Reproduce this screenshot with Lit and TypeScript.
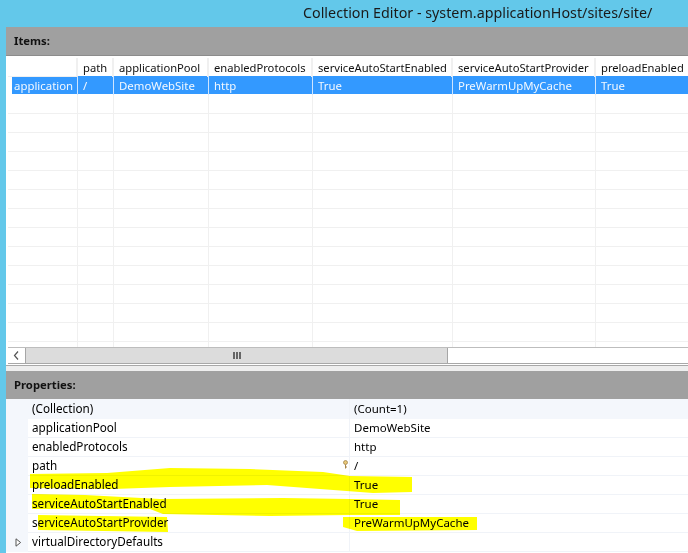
import { LitElement, html, css, svg } from "lit";
import { customElement } from "lit/decorators.js";

const columns = ["", "path", "applicationPool", "enabledProtocols", "serviceAutoStartEnabled", "serviceAutoStartProvider", "preloadEnabled"];
const selected = ["application", "/", "DemoWebSite", "http", "True", "PreWarmUpMyCache", "True"];
const props = [
  ["(Collection)", "(Count=1)"],
  ["applicationPool", "DemoWebSite"],
  ["enabledProtocols", "http"],
  ["path", "/"],
  ["preloadEnabled", "True"],
  ["serviceAutoStartEnabled", "True"],
  ["serviceAutoStartProvider", "PreWarmUpMyCache"],
  ["virtualDirectoryDefaults", ""],
];

@customElement("app-root")
export class AppRoot extends LitElement {
  static styles = css`
    :host {
      display: flex;
      flex-direction: column;
      position: relative;
      width: 688px;
      height: 553px;
      overflow: hidden;
      background: #63c8ea;
      font-family: "Noto Sans", "Open Sans", sans-serif;
      font-size: 11.7px;
      color: #000;
    }
    .title {
      height: 27px;
      padding-left: 303px;
      font-size: 14.3px;
      line-height: 26px;
      color: #1a1a1a;
      white-space: nowrap;
    }
    .window {
      flex: 1;
      margin-left: 6px;
      display: flex;
      flex-direction: column;
      background: #fff;
      min-height: 0;
    }
    .section {
      flex: none;
      height: 28px;
      padding-left: 8px;
      background: #a0a0a0;
      font-weight: 700;
      font-size: 11.3px;
      line-height: 28px;
      color: #111;
    }
    .list {
      flex: none;
      height: 310px;
      display: flex;
      flex-direction: column;
      border-top: 1px solid #8c8c8c;
      box-sizing: border-box;
      padding: 2px 0 0 2px;
    }
    .rows {
      flex: 1;
      min-height: 0;
      overflow: hidden;
    }
    .row {
      display: grid;
      grid-template-columns: 70px 36px 95px 104px 140px 143px 120px;
      height: 19px;
      box-sizing: border-box;
      border-bottom: 1px solid #f0f0f0;
      font-size: 11.4px;
      white-space: nowrap;
      line-height: 20px;
    }
    .row span {
      box-sizing: border-box;
      border-right: 1px solid #f0f0f0;
      padding-left: 5px;
    }
    .row.head {
      height: 18px;
      border-bottom: 0;
      font-size: 11.2px;
      line-height: 19px;
      color: #111;
    }
    .row.head span {
      border-right: 2px solid #f0f0f0;
    }
    .row.head span:first-child {
      background: #fff;
      border-bottom: 1px solid #f0f0f0;
    }
    .row.sel {
      color: #f2f8ff;
      background: linear-gradient(#3399ff, #3399ff) no-repeat 4px 0 / 100% 18px;
      border-bottom-color: #fff;
    }
    .row.sel span {
      border-right-color: #cfe5ff;
    }
    .row.sel span:first-child {
      padding-left: 6px;
    }
    .bar {
      flex: none;
      display: flex;
      height: 17px;
      margin-bottom: 1px;
      box-sizing: border-box;
      border-top: 1px solid #bdbdbd;
      border-bottom: 1px solid #a8a8a8;
    }
    .btn {
      flex: none;
      width: 17px;
      display: flex;
      align-items: center;
      justify-content: center;
    }
    .thumb {
      flex: none;
      width: 423px;
      box-sizing: border-box;
      background: #dcdcdc;
      border-left: 1px solid #a6a6a6;
      border-right: 1px solid #a6a6a6;
      display: flex;
      align-items: center;
      justify-content: center;
    }
    .divider {
      flex: none;
      height: 6px;
      box-sizing: border-box;
      border-top: 1px solid #a8a8a8;
      background: #eeeeee;
    }
    .prop {
      display: grid;
      grid-template-columns: 22px 322px 1fr;
      height: 19px;
      line-height: 19px;
      white-space: nowrap;
    }
    .prop .gutter {
      background: #f4f7fc;
      display: flex;
      align-items: center;
      justify-content: center;
      padding-left: 3px;
    }
    .prop .name,
    .prop .value {
      box-sizing: border-box;
      border-bottom: 1px solid #f0f3f8;
      padding-left: 4px;
    }
    .prop .name {
      position: relative;
      border-right: 1px solid #f0f3f8;
    }
    .prop .value {
      font-size: 11.5px;
    }
    .prop.first {
      background: #f4f7fc;
    }
    .prop.first .name,
    .prop.first .value {
      border-bottom-color: #f4f7fc;
    }
    .key {
      position: absolute;
      right: 1px;
      top: 4px;
    }
    .marker {
      position: absolute;
      inset: 0;
      width: 688px;
      height: 553px;
      pointer-events: none;
      mix-blend-mode: multiply;
    }
  `;

  render() {
    return html`
      <div class="title">Collection Editor - system.applicationHost/sites/site/</div>
      <div class="window">
        <div class="section">Items:</div>
        <div class="list">
          <div class="rows">
            <div class="row head">${columns.map((c) => html`<span>${c}</span>`)}</div>
            <div class="row sel">${selected.map((c) => html`<span>${c}</span>`)}</div>
            ${Array.from({ length: 14 }, () => html`<div class="row">${columns.map(() => html`<span></span>`)}</div>`)}
          </div>
          <div class="bar">
            <div class="btn">
              <svg width="7" height="9" viewBox="0 0 7 9"><path d="M5 .5 1.5 4.5 5 8.5" fill="none" stroke="#555" stroke-width="1.2" /></svg>
            </div>
            <div class="thumb">
              <svg width="8" height="7" viewBox="0 0 8 7"><path d="M0 0h2v7H0zM3 0h2v7H3zM6 0h2v7H6z" fill="#666" /></svg>
            </div>
          </div>
        </div>
        <div class="divider"></div>
        <div class="section">Properties:</div>
        <div class="props">
          ${props.map(
            ([name, value], i) => html`
              <div class="prop ${i === 0 ? "first" : ""}">
                <div class="gutter">
                  ${name === "virtualDirectoryDefaults"
                    ? html`<svg width="7" height="9" viewBox="0 0 7 9"><path d="M1 .8 5.6 4.5 1 8.2Z" fill="#fff" stroke="#555" /></svg>`
                    : ""}
                </div>
                <div class="name">
                  ${name}
                  ${name === "path"
                    ? html`<svg class="key" width="5" height="9" viewBox="0 0 5 9"><path d="M2.5 4.5V8.5M2.5 7H4" stroke="#a5844a" fill="none" /><circle cx="2.5" cy="2.5" r="2" fill="#e8c878" stroke="#9a7a40" stroke-width=".7" /></svg>`
                    : ""}
                </div>
                <div class="value">${value}</div>
              </div>
            `
          )}
        </div>
      </div>
      <svg class="marker" viewBox="0 0 688 553">
        ${svg`<g fill="#ffff00">
          <path d="M30 474 L107 473 L170 468 L250 469 L323 472 L350 476 L412 477 L412 492 L373 493 L320 489 L267 485 L170 487 L113 489 L30 488 Z" />
          <path d="M32 494 L85 495 L160 499 L283 498 L350 499 L400 500 L400 515 L350 515 L270 516 L163 514 L150 509 L32 509 Z" />
          <path d="M38 515 L167 517 L168 532 L38 530 Z" />
          <path d="M343 517 L477 517 L477 530 L357 531 L343 527 Z" />
        </g>`}
      </svg>
    `;
  }
}
